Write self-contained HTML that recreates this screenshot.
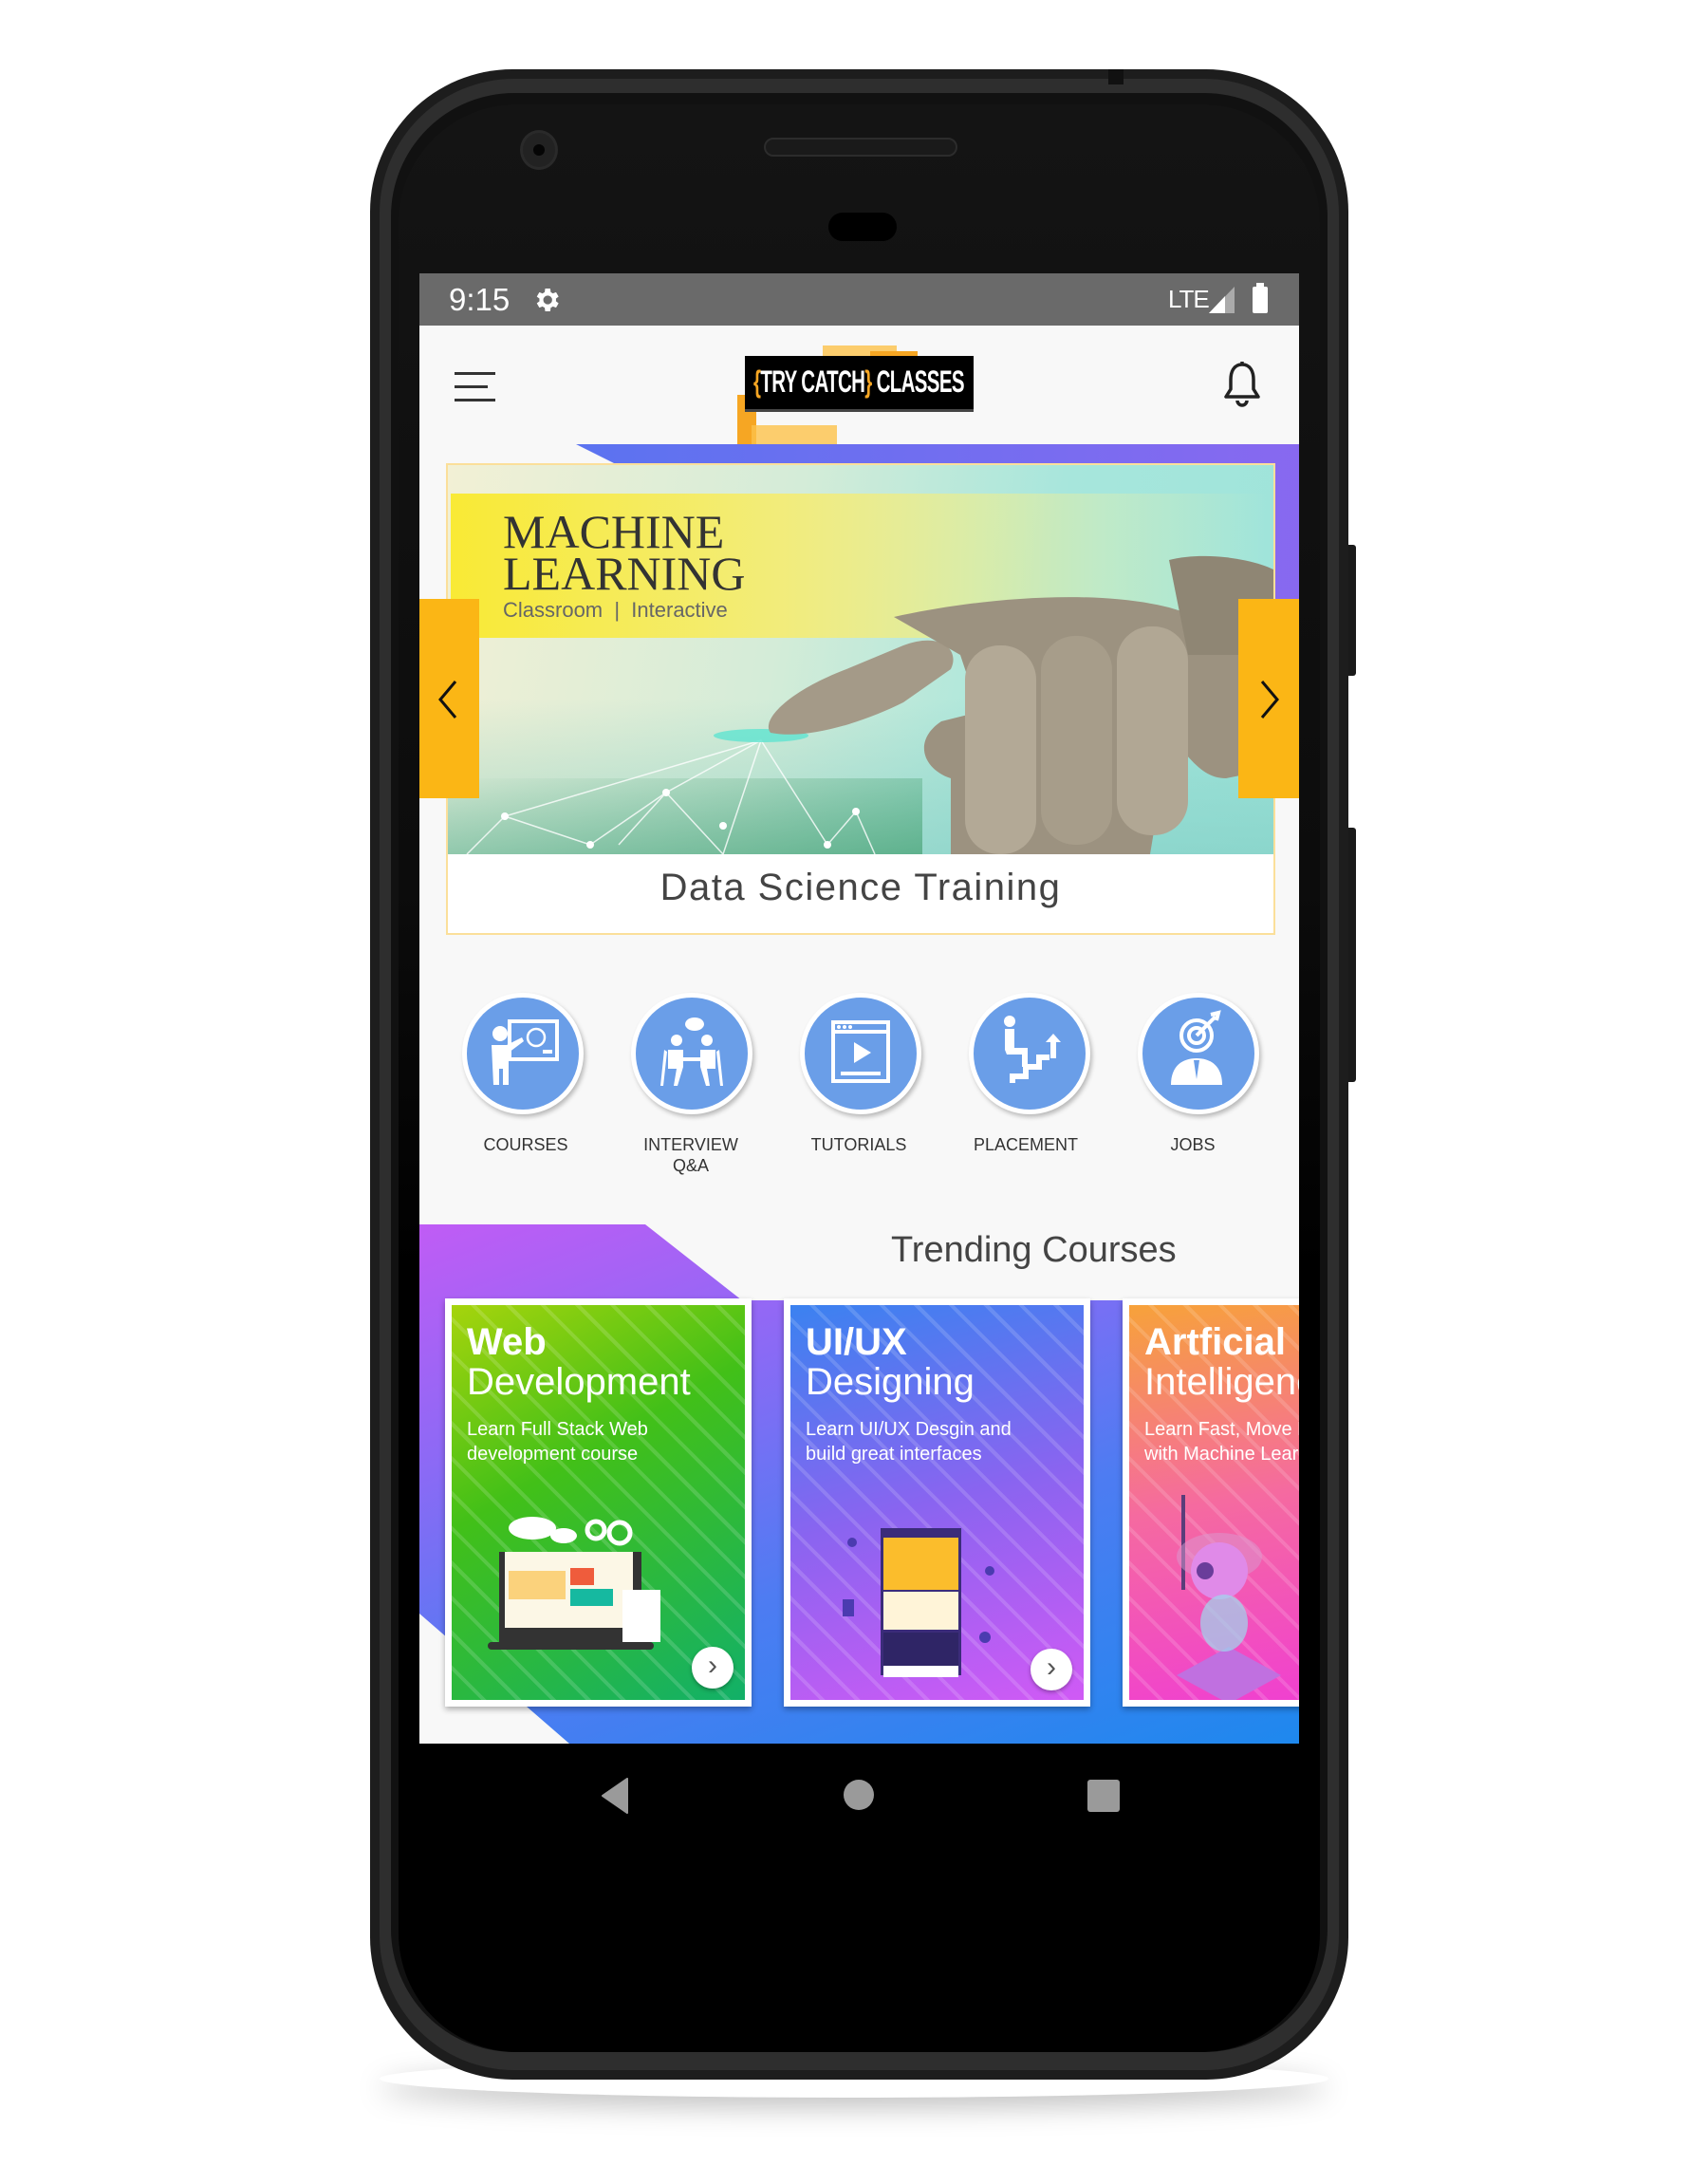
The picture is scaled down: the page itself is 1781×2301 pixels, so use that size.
<!DOCTYPE html>
<html><head><meta charset="utf-8"><style>
*{margin:0;padding:0;box-sizing:border-box}
body{width:1781px;height:2301px;background:#fff;position:relative;overflow:hidden;font-family:"Liberation Sans",sans-serif}
.a{position:absolute}
.lbl{position:absolute;font-size:18px;color:#333;text-align:center;width:160px;line-height:22px}
.circ{position:absolute;width:128px;height:128px;border-radius:50%;background:#6a9ee8;border:5px solid #fff;box-shadow:2px 3px 5px rgba(0,0,0,.25)}
.card{position:absolute;top:1080px;height:430px;border:7px solid #fff;box-shadow:0 3px 6px rgba(0,0,0,.3);overflow:hidden}
.card h3{position:absolute;left:16px;top:18px;color:#fff;font-size:40px;line-height:42px;font-weight:normal}
.card h3 b{font-weight:bold}
.card p{position:absolute;left:16px;top:118px;color:#fff;font-size:20px;line-height:26px}
.stripes{position:absolute;inset:0;background:repeating-linear-gradient(45deg,rgba(255,255,255,0) 0 22px,rgba(255,255,255,.15) 22px 26px)}
.go{position:absolute;width:44px;height:44px;border-radius:50%;background:#fff;box-shadow:0 2px 4px rgba(0,0,0,.3);font-size:30px;color:#555;text-align:center;line-height:40px}
</style></head><body>
<div class="a" style="left:400px;top:2170px;width:1000px;height:40px;border-radius:50%;box-shadow:0 10px 30px rgba(0,0,0,.25)"></div>
<div class="a" style="left:1415px;top:574px;width:14px;height:138px;background:#1a1a1a;border-radius:3px"></div>
<div class="a" style="left:1415px;top:872px;width:14px;height:268px;background:#1a1a1a;border-radius:3px"></div>
<div class="a" style="left:390px;top:73px;width:1031px;height:2118px;background:#1d1d1d;border-radius:150px"></div>
<div class="a" style="left:400px;top:83px;width:1011px;height:2098px;background:#2e2e2e;border-radius:142px"></div>
<div class="a" style="left:412px;top:98px;width:987px;height:2064px;background:#111;border-radius:130px"></div>
<div class="a" style="left:420px;top:110px;width:971px;height:2052px;border-radius:125px;background:linear-gradient(#141414,#0c0c0c 40%,#000 60%)"></div>
<div class="a" style="left:1168px;top:73px;width:16px;height:16px;background:#111"></div>
<div class="a" style="left:548px;top:137px;width:40px;height:42px;border-radius:50%;background:#222;border:3px solid #2a2a2a"></div>
<div class="a" style="left:562px;top:152px;width:12px;height:12px;border-radius:50%;background:#050505"></div>
<div class="a" style="left:805px;top:145px;width:204px;height:20px;border-radius:10px;background:#1a1a1a;border:2px solid #2c2c2c"></div>
<div class="a" style="left:873px;top:224px;width:72px;height:30px;border-radius:15px;background:#000"></div>
<div class="a" style="left:442px;top:288px;width:927px;height:1549px;background:#f8f8f8;overflow:hidden">
  <div class="a" style="left:0;top:0;width:927px;height:55px;background:#6a6a6a"></div>
  <div class="a" style="left:31px;top:9px;color:#fff;font-size:33px">9:15</div>
  <svg class="a" style="left:118px;top:12px" width="32" height="32" viewBox="0 0 24 24"><path fill="#fff" d="M19.4 13c.04-.33.06-.66.06-1s-.02-.67-.06-1l2.1-1.65-2-3.46-2.5 1a7.3 7.3 0 0 0-1.7-1L14.9 3h-4l-.4 2.9a7.3 7.3 0 0 0-1.7 1l-2.5-1-2 3.46L6.4 11c-.04.33-.06.66-.06 1s.02.67.06 1l-2.1 1.65 2 3.46 2.5-1c.5.4 1.1.75 1.7 1l.4 2.9h4l.4-2.9c.6-.25 1.2-.6 1.7-1l2.5 1 2-3.46zM12.9 15.5a3.5 3.5 0 1 1 0-7 3.5 3.5 0 0 1 0 7z"/></svg>
  <div class="a" style="left:789px;top:12px;color:#fff;font-size:26px;letter-spacing:-1px">LTE</div>
  <svg class="a" style="left:832px;top:14px" width="30" height="28"><path d="M0 28 L27 0 V28Z" fill="#aaa"/><path d="M0 28 L17 10 V28Z" fill="#fff"/></svg>
  <div class="a" style="left:878px;top:14px;width:16px;height:28px;background:#fff;border-radius:2px"></div>
  <div class="a" style="left:882px;top:10px;width:8px;height:5px;background:#fff"></div>
  <div class="a" style="left:37px;top:104px;width:43px;height:3px;background:#333"></div>
  <div class="a" style="left:37px;top:118px;width:35px;height:3px;background:#333"></div>
  <div class="a" style="left:37px;top:132px;width:43px;height:3px;background:#333"></div>
  <div class="a" style="left:425px;top:76px;width:78px;height:22px;background:#fcc24a;opacity:.8"></div>
  <div class="a" style="left:475px;top:82px;width:50px;height:55px;background:#f6a623"></div>
  <div class="a" style="left:335px;top:128px;width:20px;height:55px;background:#f6a623"></div>
  <div class="a" style="left:350px;top:160px;width:90px;height:30px;background:#fcc24a;opacity:.8"></div>
  <div class="a" style="left:343px;top:87px;width:241px;height:59px;background:#000;border-bottom:3px solid #444"></div>
  <div class="a" style="left:352px;top:96px;font-weight:bold;font-size:32px;color:#fff;letter-spacing:-1px;transform:scaleX(.64);transform-origin:left;white-space:nowrap"><span style="color:#f6a623">{</span>TRY CATCH<span style="color:#f6a623">}</span> CLASSES</div>
  <svg class="a" style="left:846px;top:92px" width="42" height="50" viewBox="0 0 42 50"><path d="M21 4 C12 4 9 12 9 20 V30 L4 38 H38 L33 30 V20 C33 12 30 4 21 4Z" fill="none" stroke="#222" stroke-width="3.5" stroke-linejoin="round"/><path d="M16 42 a5 5 0 0 0 10 0" fill="none" stroke="#222" stroke-width="3.5"/><path d="M21 1V5" stroke="#222" stroke-width="3.5"/></svg>
  <div class="a" style="left:165px;top:180px;width:800px;height:240px;background:linear-gradient(90deg,#5b73f0,#8a68f0)"></div>
  <div class="a" style="left:165px;top:180px;width:40px;height:20px;background:#f8f8f8;clip-path:polygon(0 0,0 100%,100% 100%)"></div>
  <div class="a" style="left:28px;top:200px;width:874px;height:497px;background:#fff;border:2px solid #fbdf9a"></div>
  <div class="a" style="left:30px;top:202px;width:870px;height:410px;background:linear-gradient(100deg,#f2f0d5 0%,#d4ecd8 40%,#a7e6dc 70%,#9ee4da 100%);overflow:hidden">
    <div class="a" style="left:0;top:0;width:870px;height:410px;background:linear-gradient(180deg,rgba(0,0,0,0) 60%,rgba(120,200,190,.5) 100%)"></div>
    <div class="a" style="left:3px;top:30px;width:860px;height:152px;background:linear-gradient(90deg,#f9ea35 0%,#f2ec7a 40%,rgba(230,240,170,.4) 80%,rgba(200,240,220,0) 100%)"></div>
    <div class="a" style="left:0;top:330px;width:500px;height:80px;background:linear-gradient(170deg,rgba(80,170,120,0),rgba(40,140,80,.5))"></div>
    <svg class="a" style="left:0;top:0" width="870" height="410"><g stroke="#fff" stroke-width="1.5" opacity=".8" fill="none"><path d="M330 290 L60 370 L150 400 L230 345 L290 410 L330 290 L400 400 L430 365 L450 410"/><path d="M330 290 L230 345 L180 400"/><path d="M60 370 L20 410"/></g><g fill="#fff"><circle cx="60" cy="370" r="4"/><circle cx="230" cy="345" r="4"/><circle cx="290" cy="380" r="4"/><circle cx="400" cy="400" r="4"/><circle cx="430" cy="365" r="4"/><circle cx="150" cy="400" r="4"/></g><ellipse cx="330" cy="285" rx="50" ry="7" fill="#5fe3d0" opacity=".8"/>
    <g fill="#a49a88"><path d="M340 282 C330 270 355 240 420 215 L480 190 C520 175 540 195 530 215 L480 250 C440 270 380 290 340 282Z"/><path d="M470 160 C560 140 680 130 760 150 L860 180 L870 320 L820 330 C790 330 780 300 760 290 L740 410 L530 410 L530 330 C500 320 490 290 520 270 L560 260 L540 200 Z" fill="#9c9280"/><rect x="545" y="190" width="75" height="220" rx="36" fill="#b3a996"/><rect x="625" y="180" width="75" height="220" rx="36" fill="#a79d8a"/><rect x="705" y="170" width="75" height="220" rx="36" fill="#b1a794"/><path d="M760 100 C800 90 850 100 870 110 V200 L780 200Z" fill="#8f8674"/></g>
    </svg>
    <div class="a" style="left:58px;top:48px;font-family:'Liberation Serif',serif;font-size:50px;line-height:44px;color:#333">MACHINE<br>LEARNING</div>
    <div class="a" style="left:58px;top:140px;font-size:22px;color:#666">Classroom&nbsp; | &nbsp;Interactive</div>
  </div>
  <div class="a" style="left:28px;top:625px;width:874px;text-align:center;font-size:40px;color:#444;letter-spacing:1.5px">Data Science Training</div>
  <div class="a" style="left:0;top:343px;width:63px;height:210px;background:#fbb615"></div>
  <div class="a" style="left:863px;top:343px;width:64px;height:210px;background:#fbb615"></div>
  <svg class="a" style="left:18px;top:428px" width="24" height="42"><path d="M20 2 L4 21 L20 40" fill="none" stroke="#111" stroke-width="3"/></svg>
  <svg class="a" style="left:884px;top:428px" width="24" height="42"><path d="M4 2 L20 21 L4 40" fill="none" stroke="#111" stroke-width="3"/></svg>
  <div class="circ" style="left:45px;top:758px"></div>
  <div class="circ" style="left:223px;top:758px"></div>
  <div class="circ" style="left:401px;top:758px"></div>
  <div class="circ" style="left:579px;top:758px"></div>
  <div class="circ" style="left:757px;top:758px"></div>
  <svg class="a" style="left:50px;top:763px" width="118" height="118" viewBox="0 0 118 118"><g fill="#fff"><rect x="45" y="25" width="50" height="40" fill="none" stroke="#fff" stroke-width="4"/><circle cx="73" cy="42" r="9" fill="none" stroke="#fff" stroke-width="2.5"/><rect x="80" y="55" width="10" height="4"/><circle cx="35" cy="38" r="8"/><path d="M26 50h16l16-8 2 4-16 12v34h-6V75h-4v17h-6z"/></g></svg>
  <svg class="a" style="left:228px;top:763px" width="118" height="118" viewBox="0 0 118 118"><g fill="#fff"><ellipse cx="62" cy="28" rx="10" ry="7"/><circle cx="43" cy="45" r="6"/><circle cx="75" cy="45" r="6"/><path d="M34 55h16v18l-6 20h-4l3-18h-9zM84 55H68v18l6 20h4l-3-18h9z"/><rect x="50" y="63" width="18" height="4"/><path d="M30 55 l-4 38h3l4-36zM88 55l4 38h-3l-4-36z"/></g></svg>
  <svg class="a" style="left:406px;top:763px" width="118" height="118" viewBox="0 0 118 118"><g fill="none" stroke="#fff" stroke-width="4"><rect x="30" y="26" width="58" height="62"/><path d="M30 36h58M38 80h42"/></g><path d="M52 47v22l18-11z" fill="#fff"/><g fill="#fff"><circle cx="36" cy="31" r="2"/><circle cx="42" cy="31" r="2"/><circle cx="48" cy="31" r="2"/></g></svg>
  <svg class="a" style="left:584px;top:763px" width="118" height="118" viewBox="0 0 118 118"><g fill="#fff"><circle cx="38" cy="25" r="6"/><path d="M33 33h10v20h14v20h-6V60H35l-2-5z"/><path d="M38 90V80h14V70h14V60h14v6H72v10H58v10H44v4z"/><path d="M84 38l8 9h-5v17h-6V47h-5z"/></g></svg>
  <svg class="a" style="left:762px;top:763px" width="118" height="118" viewBox="0 0 118 118"><g fill="none" stroke="#fff" stroke-width="4"><circle cx="57" cy="40" r="16"/><circle cx="57" cy="40" r="8"/></g><path d="M57 40l20-20M72 18l8-2-2 8" stroke="#fff" stroke-width="4" fill="none"/><path d="M30 92c0-20 12-28 27-28s27 8 27 28z" fill="#fff"/><path d="M54 66h6l-3 20z" fill="#6a9ee8"/></svg>
  <div class="lbl" style="left:32px;top:907px">COURSES</div>
  <div class="lbl" style="left:206px;top:907px">INTERVIEW<br>Q&amp;A</div>
  <div class="lbl" style="left:383px;top:907px">TUTORIALS</div>
  <div class="lbl" style="left:559px;top:907px">PLACEMENT</div>
  <div class="lbl" style="left:735px;top:907px">JOBS</div>
  <div class="a" style="left:0;top:1002px;width:927px;height:547px;background:linear-gradient(160deg,#c05cf5 0%,#8a6af5 30%,#4d7cf2 60%,#1e88ee 100%);clip-path:polygon(0 0,238px 0,340px 80px,927px 80px,927px 547px,158px 547px,0 410px)"></div>
  <div class="a" style="left:497px;top:1008px;font-size:38px;color:#444">Trending Courses</div>
  <div class="card" style="left:27px;width:323px;background:linear-gradient(150deg,#a6d40c 0%,#42c018 40%,#12b068 100%)"><div class="stripes"></div>
    <h3><b>Web</b><br>Development</h3><p>Learn Full Stack Web<br>development course</p>
    <svg class="a" style="left:30px;top:215px" width="200" height="160"><ellipse cx="55" cy="20" rx="25" ry="12" fill="#fff"/><ellipse cx="88" cy="28" rx="14" ry="8" fill="#fff"/><circle cx="122" cy="22" r="9" fill="none" stroke="#fff" stroke-width="5"/><circle cx="147" cy="25" r="11" fill="none" stroke="#fff" stroke-width="5"/><rect x="20" y="45" width="150" height="95" fill="#333"/><rect x="26" y="45" width="135" height="80" fill="#fcf7e6"/><rect x="30" y="65" width="60" height="30" fill="#fbd27c"/><rect x="95" y="62" width="25" height="18" fill="#ef5c3c"/><rect x="95" y="84" width="45" height="18" fill="#16b9a0"/><rect x="8" y="140" width="175" height="8" rx="4" fill="#333"/><rect x="150" y="85" width="40" height="55" fill="#fff"/></svg>
    <div class="go" style="left:253px;top:360px">›</div></div>
  <div class="card" style="left:384px;width:323px;background:linear-gradient(165deg,#3b82f0 0%,#8a64f0 50%,#d05af5 100%)"><div class="stripes"></div>
    <h3><b>UI/UX</b><br>Designing</h3><p>Learn UI/UX Desgin and<br>build great interfaces</p>
    <svg class="a" style="left:40px;top:210px" width="190" height="200"><rect x="55" y="25" width="85" height="155" fill="#3b2c7a"/><rect x="58" y="35" width="79" height="55" fill="#fbbd2c"/><rect x="58" y="92" width="79" height="40" fill="#fff4d8"/><rect x="58" y="135" width="79" height="35" fill="#2f2566"/><rect x="58" y="170" width="79" height="12" fill="#fff"/><g fill="#4b3bb0"><circle cx="25" cy="40" r="5"/><circle cx="170" cy="70" r="5"/><rect x="15" y="100" width="12" height="18"/><circle cx="165" cy="140" r="6"/></g></svg>
    <div class="go" style="left:253px;top:362px">›</div></div>
  <div class="card" style="left:741px;width:200px;background:linear-gradient(170deg,#f7a23a 0%,#f56aa0 50%,#f040d0 100%)"><div class="stripes"></div>
    <h3 style="white-space:nowrap"><b>Artficial</b><br>Intelligence</h3><p style="white-space:nowrap">Learn Fast, Move F<br>with Machine Learning</p>
    <svg class="a" style="left:10px;top:190px" width="190" height="230"><rect x="45" y="10" width="4" height="100" fill="#5a3d7a"/><ellipse cx="85" cy="75" rx="45" ry="25" fill="#d99ad0" opacity=".5"/><circle cx="85" cy="90" r="30" fill="#e08ae8"/><circle cx="70" cy="90" r="9" fill="#6a3d9a"/><path d="M40 200 L95 170 L150 200 L95 230Z" fill="#c070e0"/><ellipse cx="90" cy="145" rx="25" ry="30" fill="#9ed8ee" opacity=".7"/></svg></div>
</div>
<svg class="a" style="left:633px;top:1873px" width="30" height="38"><path d="M28 1 V37 L2 19Z" fill="#9a9a9a" stroke="#9a9a9a" stroke-width="2" stroke-linejoin="round"/></svg>
<div class="a" style="left:889px;top:1875px;width:32px;height:32px;border-radius:50%;background:#9a9a9a"></div>
<div class="a" style="left:1146px;top:1875px;width:34px;height:34px;border-radius:3px;background:#9a9a9a"></div>
</body></html>
